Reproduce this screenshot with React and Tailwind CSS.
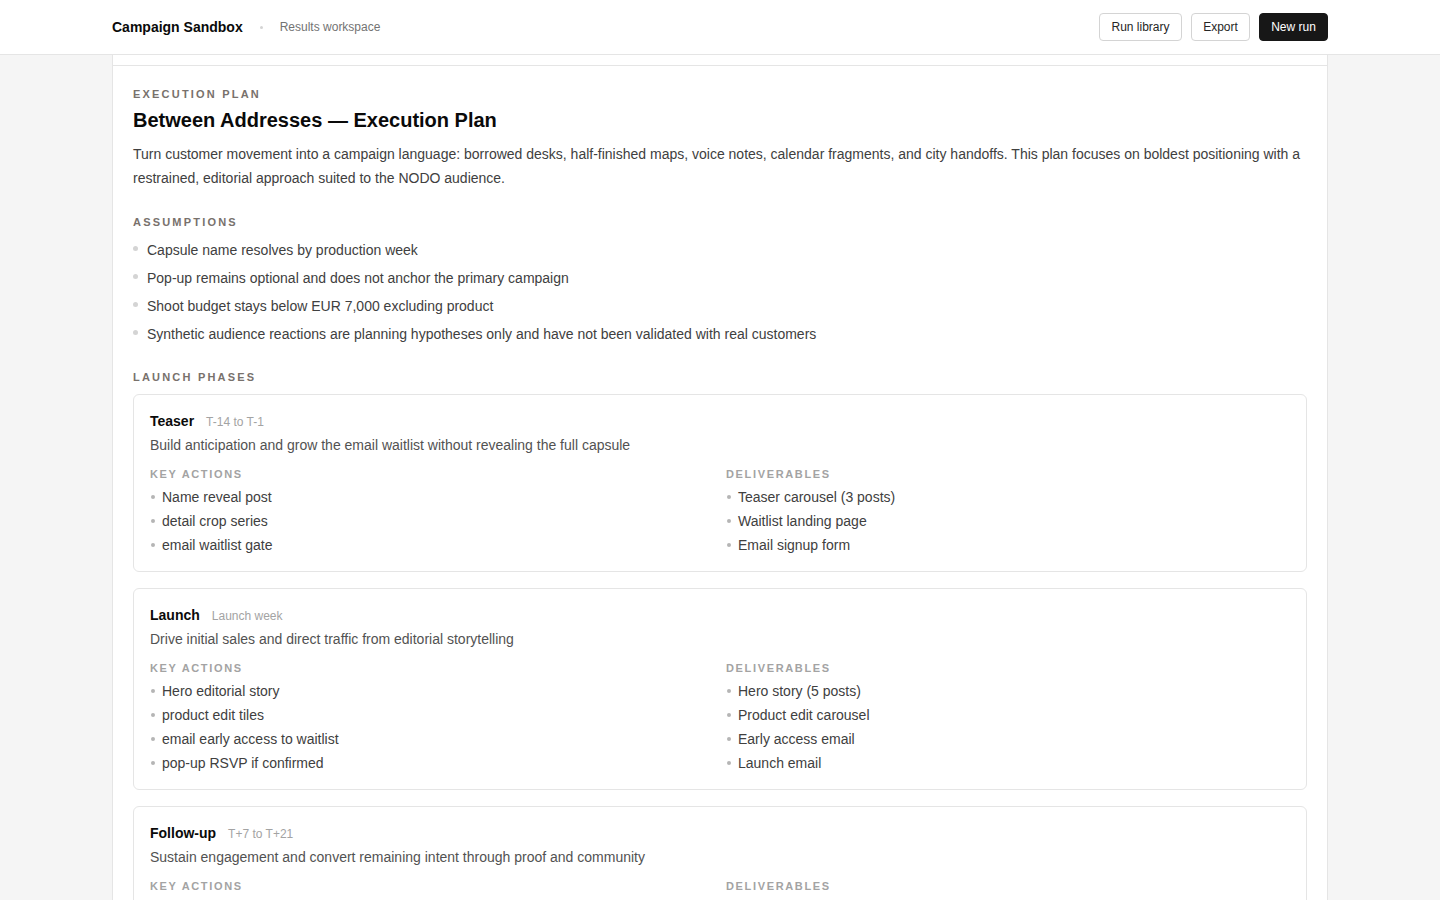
const assumptions = [
  'Capsule name resolves by production week',
  'Pop-up remains optional and does not anchor the primary campaign',
  'Shoot budget stays below EUR 7,000 excluding product',
  'Synthetic audience reactions are planning hypotheses only and have not been validated with real customers',
];

const phases = [
  {
    name: 'Teaser',
    window: 'T-14 to T-1',
    goal: 'Build anticipation and grow the email waitlist without revealing the full capsule',
    actions: ['Name reveal post', 'detail crop series', 'email waitlist gate'],
    deliverables: ['Teaser carousel (3 posts)', 'Waitlist landing page', 'Email signup form'],
  },
  {
    name: 'Launch',
    window: 'Launch week',
    goal: 'Drive initial sales and direct traffic from editorial storytelling',
    actions: [
      'Hero editorial story',
      'product edit tiles',
      'email early access to waitlist',
      'pop-up RSVP if confirmed',
    ],
    deliverables: ['Hero story (5 posts)', 'Product edit carousel', 'Early access email', 'Launch email'],
  },
  {
    name: 'Follow-up',
    window: 'T+7 to T+21',
    goal: 'Sustain engagement and convert remaining intent through proof and community',
    actions: ['Customer styling reposts', 'behind-the-scenes notes', 'reminder email to non-buyers'],
    deliverables: ['UGC repost set', 'BTS story (4 frames)', 'Reminder email'],
  },
];

function PhaseList({ label, items }) {
  return (
    <div>
      <div className="mt-[11px] mb-[5px] text-[11px] leading-4 font-bold uppercase tracking-[0.15em] text-[#a3a3a3]">
        {label}
      </div>
      <ul className="space-y-1">
        {items.map((item) => (
          <li key={item} className="flex items-center gap-[7px] text-sm leading-5 text-[#404040]">
            <span className="ml-px w-1 h-1 rounded-full bg-[#b5b5b5] shrink-0" />
            {item}
          </li>
        ))}
      </ul>
    </div>
  );
}

function PhaseCard({ phase }) {
  return (
    <div className="border border-[#e5e5e5] rounded-md p-4">
      <div className="flex items-baseline gap-3">
        <span className="text-sm leading-5 font-bold text-[#0a0a0a]">{phase.name}</span>
        <span className="text-xs text-[#a3a3a3]">{phase.window}</span>
      </div>
      <p className="mt-1 text-sm leading-5 text-[#525252]">{phase.goal}</p>
      <div className="grid grid-cols-2 gap-3">
        <PhaseList label="Key actions" items={phase.actions} />
        <PhaseList label="Deliverables" items={phase.deliverables} />
      </div>
    </div>
  );
}

export default function App() {
  return (
    <div
      className="h-screen flex flex-col overflow-hidden bg-[#f5f5f5] text-[#0a0a0a]"
      style={{ fontFamily: '"Liberation Sans", Arial, sans-serif' }}
    >
      <header className="h-[55px] shrink-0 bg-white border-b border-[#e5e5e5]">
        <div className="max-w-[1216px] mx-auto h-full flex items-center justify-between">
          <div className="flex items-center gap-[17px]">
            <span className="text-sm font-bold text-[#0a0a0a]">Campaign Sandbox</span>
            <span className="w-[3px] h-[3px] rounded-full bg-[#d4d4d4]" />
            <span className="text-xs text-[#737373]">Results workspace</span>
          </div>
          <div className="flex items-center gap-[9px]">
            <button className="h-7 w-[83px] text-xs text-[#262626] bg-white border border-[#d4d4d4] rounded">
              Run library
            </button>
            <button className="h-7 w-[59px] text-xs text-[#262626] bg-white border border-[#d4d4d4] rounded">
              Export
            </button>
            <button className="h-7 w-[69px] text-xs text-white bg-[#171717] border border-[#171717] rounded">
              New run
            </button>
          </div>
        </div>
      </header>

      <main className="flex-1 overflow-hidden">
        <div className="max-w-[1216px] mx-auto bg-white border-x border-[#e5e5e5] h-full">
          <div className="h-[10px]" />
          <section className="border-t border-[#e5e5e5] p-5">
            <div className="text-[11px] leading-4 font-bold uppercase tracking-[0.2em] text-[#78716c]">
              Execution plan
            </div>
            <h1 className="mt-1 text-xl leading-7 font-bold text-[#0a0a0a]">
              Between Addresses — Execution Plan
            </h1>
            <p className="mt-2 text-sm leading-6 text-[#404040]">
              Turn customer movement into a campaign language: borrowed desks, half-finished maps, voice notes,
              calendar fragments, and city handoffs. This plan focuses on boldest positioning with a restrained,
              editorial approach suited to the NODO audience.
            </p>

            <div className="mt-6 text-[11px] leading-4 font-bold uppercase tracking-[0.2em] text-[#78716c]">
              Assumptions
            </div>
            <ul className="mt-2.5 space-y-2">
              {assumptions.map((a) => (
                <li key={a} className="flex items-center gap-2 text-sm leading-5 text-[#404040]">
                  <span className="w-[5px] h-[5px] mb-[3px] mr-px rounded-full bg-[#d4d4d4] shrink-0" />
                  {a}
                </li>
              ))}
            </ul>

            <div className="mt-[25px] text-[11px] leading-4 font-bold uppercase tracking-[0.2em] text-[#78716c]">
              Launch phases
            </div>
            <div className="mt-[9px] space-y-4">
              {phases.map((p) => (
                <PhaseCard key={p.name} phase={p} />
              ))}
            </div>
          </section>
        </div>
      </main>
    </div>
  );
}
